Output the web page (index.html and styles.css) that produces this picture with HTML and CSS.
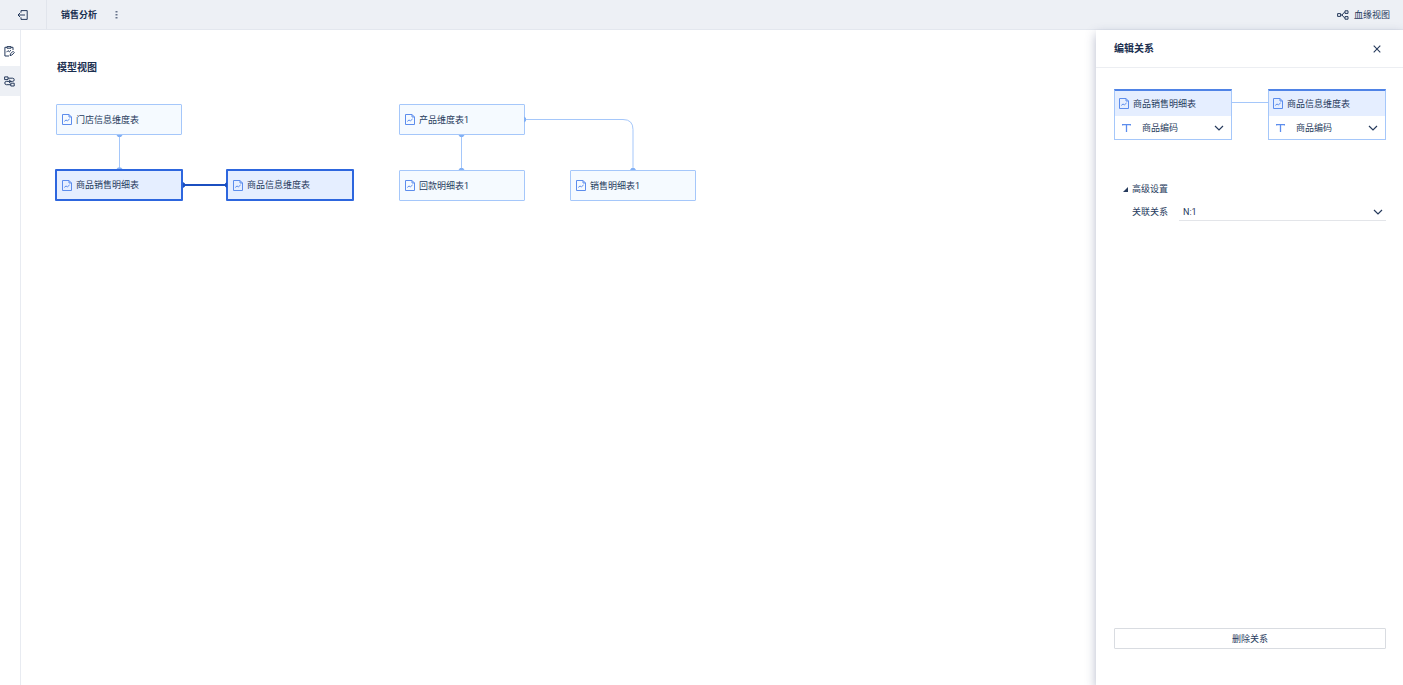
FILE: index.html
```html
<!DOCTYPE html>
<html lang="zh">
<head>
    <meta charset="UTF-8">
    <title>销售分析</title>
    <link rel="stylesheet" href="styles.css">
</head>
<body>
<svg class="defs" aria-hidden="true">
    <symbol id="icon-table" viewBox="0 0 10 11">
        <path d="M.5 .5H7L9.5 3V10.5H.5Z M7 .5V3H9.5" fill="none" stroke="currentColor"/>
        <path d="M2.3 7.4L4 6L5.4 6.8L7.6 5" fill="none" stroke="currentColor"/>
    </symbol>
    <symbol id="icon-arrow" viewBox="0 0 10 6">
        <path d="M1 1L5 5L9 1" fill="none" stroke="currentColor" stroke-width="1.2"/>
    </symbol>
    <symbol id="icon-text" viewBox="0 0 9 8">
        <path d="M.5 1.6V.6H8.5V1.6 M4.5 .6V8" fill="none" stroke="currentColor" stroke-width="1.3"/>
    </symbol>
</svg>

<header class="topbar">
    <button class="exit" aria-label="退出">
        <svg width="11" height="10" viewBox="0 0 11 10"><path d="M4 2.6V.6H10.2V9.4H4V7.4 M8 5H1 M3.2 2.8L1 5L3.2 7.2" fill="none" stroke="currentColor"/></svg>
    </button>
    <h1>销售分析</h1>
    <button class="more" aria-label="更多">
        <svg width="3" height="8" viewBox="0 0 3 8"><path d="M.5 0H2.5V1.5H.5Z M.5 3H2.5V4.5H.5Z M.5 6H2.5V7.5H.5Z" fill="currentColor"/></svg>
    </button>
    <button class="lineage">
        <svg width="12" height="10" viewBox="0 0 12 10"><path d="M.6 3.6H3.6V6.4H.6Z M3.6 5L5 5L7.4 2.2H8 M5 5L7.4 7.8H8 M8 .8H11V3.4H8Z M8 6.6H11V9.2H8Z" fill="none" stroke="currentColor"/></svg>
        血缘视图
    </button>
</header>

<div class="page">
    <nav class="sidebar">
        <button aria-label="数据编辑">
            <svg width="11" height="11" viewBox="0 0 11 11"><path d="M3 1.3H.9V10H5 M7 1.3H9V4 M3 .6H7V2.2H3Z M2.5 6.2L4 4.6L5.3 5.8L7 4.2 M6 9.6L6.5 7.8L9 5.3L10.3 6.6L7.8 9.1Z" fill="none" stroke="currentColor"/></svg>
        </button>
        <button class="active" aria-label="模型视图">
            <svg width="11" height="11" viewBox="0 0 11 11"><path d="M.6 .9H4V3.6H.6Z M4 2.2H8.6Q10.2 2.2 10.2 3.8T8.6 5.4H2.3Q.8 5.4 .8 7T2.3 8.7H6.8 M6.8 7.2H10.2V10H6.8Z M5 3.9L7 5.4L5 7" fill="none" stroke="currentColor"/></svg>
        </button>
    </nav>

    <main>
        <h2>模型视图</h2>
        <div class="canvas">
            <svg class="links" width="641" height="98" viewBox="0 0 641 98">
                <path class="link" d="M63.5 31V66 M405.5 31V66 M469 15.5H567Q577 15.5 577 25.5V66"/>
                <path class="link-active" d="M127 81H171"/>
            </svg>
            <div class="node n1"><svg><use href="#icon-table"/></svg>门店信息维度表</div>
            <div class="node n2"><svg><use href="#icon-table"/></svg>产品维度表1</div>
            <div class="node n3 selected"><svg><use href="#icon-table"/></svg>商品销售明细表</div>
            <div class="node n4 selected"><svg><use href="#icon-table"/></svg>商品信息维度表</div>
            <div class="node n5"><svg><use href="#icon-table"/></svg>回款明细表1</div>
            <div class="node n6"><svg><use href="#icon-table"/></svg>销售明细表1</div>
            <svg class="links" width="641" height="98" viewBox="0 0 641 98">
                <path class="port" d="M60.5 31H66.5L65 33H62Z M60.5 65H66.5L65 63.5H62Z M402.5 31H408.5L407 33H404Z M402.5 66H408.5L407 64H404Z M468 12.5V18.5L470 17V14Z M574 66H580L578.5 64H575.5Z"/>
                <path class="port-active" d="M127 78V84L129 82.5V79.5Z M171 78V84L169 82.5V79.5Z"/>
            </svg>
        </div>
    </main>

    <aside class="panel">
        <div class="panel-head">
            <h2>编辑关系</h2>
            <button aria-label="关闭">
                <svg width="8" height="8" viewBox="0 0 8 8"><path d="M.7 .7L7.3 7.3M7.3 .7L.7 7.3" fill="none" stroke="currentColor" stroke-width="1.1"/></svg>
            </button>
        </div>
        <div class="panel-body">
            <div class="relation">
                <div class="table-card">
                    <div class="table-name"><svg><use href="#icon-table"/></svg>商品销售明细表</div>
                    <div class="field">
                        <svg class="type"><use href="#icon-text"/></svg>
                        <select aria-label="商品销售明细表字段"><option>商品编码</option></select>
                        <svg class="arrow"><use href="#icon-arrow"/></svg>
                    </div>
                </div>
                <span class="joint"></span>
                <div class="table-card">
                    <div class="table-name"><svg><use href="#icon-table"/></svg>商品信息维度表</div>
                    <div class="field">
                        <svg class="type"><use href="#icon-text"/></svg>
                        <select aria-label="商品信息维度表字段"><option>商品编码</option></select>
                        <svg class="arrow"><use href="#icon-arrow"/></svg>
                    </div>
                </div>
            </div>

            <details open>
                <summary><svg width="5" height="5" viewBox="0 0 5 5"><path d="M5 0V5H0Z" fill="currentColor"/></svg>高级设置</summary>
                <div class="setting">
                    <label for="cardinality">关联关系</label>
                    <div class="field">
                        <select id="cardinality"><option>N:1</option><option>1:N</option><option>1:1</option></select>
                        <svg class="arrow"><use href="#icon-arrow"/></svg>
                    </div>
                </div>
            </details>

            <button class="delete">删除关系</button>
        </div>
    </aside>
</div>
</body>
</html>
```

FILE: styles.css
```css
* {
    box-sizing: border-box;
}

body {
    display: flex;
    flex-direction: column;
    margin: 0;
    min-height: 100vh;
    overflow: hidden;
    font: 9px/14px Roboto, "Noto Sans CJK SC", sans-serif;
    color: #263a5c;
    background: #fff;
}

h1, h2 {
    margin: 0;
    font-size: 9px;
    font-weight: bold;
    color: #1b2f50;
}

h2 {
    font-size: 10px;
    line-height: 16px;
}

button, select {
    margin: 0;
    padding: 0;
    border: none;
    border-radius: 0;
    font: inherit;
    color: inherit;
    background: none;
    cursor: pointer;
}

svg {
    flex: none;
    display: block;
}

.defs {
    display: none;
}

/* 顶栏 */
.topbar {
    display: flex;
    align-items: center;
    height: 30px;
    padding-right: 13px;
    background: #edf0f5;
    border-bottom: 1px solid #e3e7ee;
}

.exit {
    display: flex;
    align-items: center;
    justify-content: center;
    width: 47px;
    height: 29px;
    padding-right: 1px;
    border-right: 1px solid #e1e5ec;
}

.topbar h1 {
    margin-left: 14px;
}

.more {
    margin-left: 18px;
    color: #66728a;
}

.lineage {
    display: flex;
    align-items: center;
    gap: 5px;
    margin-left: auto;
}

.page {
    display: flex;
    flex: 1;
}

/* 左侧栏 */
.sidebar {
    width: 21px;
    padding-top: 7px;
    border-right: 1px solid #e8ebf1;
}

.sidebar button {
    display: flex;
    align-items: center;
    justify-content: center;
    width: 20px;
    height: 29px;
    padding-right: 1px;
}

.sidebar .active {
    height: 30px;
    background: #edf0f5;
}

main {
    flex: 1;
    padding: 30px 35px;
}

main h2 {
    padding-left: 1px;
}

/* 模型画布 */
.canvas {
    position: relative;
    margin-top: 28px;
}

.links {
    position: absolute;
    left: 0;
    top: 0;
    pointer-events: none;
}

.link {
    fill: none;
    stroke: #a5c7fa;
}

.link-active {
    stroke: #1b4fc0;
    stroke-width: 2;
}

.port {
    fill: #82b0f5;
}

.port-active {
    fill: #1b4fc0;
}

.node {
    position: absolute;
    display: flex;
    align-items: center;
    gap: 4px;
    width: 126px;
    height: 31px;
    padding-left: 5px;
    border: 1px solid #a5c7fa;
    border-radius: 1px;
    background: #f5faff;
}

.node svg, .table-name svg {
    width: 10px;
    height: 11px;
    color: #5c8ded;
}

.node.selected {
    width: 128px;
    height: 32px;
    border: 2px solid #2d66de;
    background: #e5eeff;
}

.n1 { left: 0; top: 0; }
.n2 { left: 343px; top: 0; }
.n3 { left: -1px; top: 65px; }
.n4 { left: 170px; top: 65px; }
.n5 { left: 343px; top: 66px; }
.n6 { left: 514px; top: 66px; }

/* 右侧编辑面板 */
.panel {
    display: flex;
    flex-direction: column;
    width: 307px;
    background: #fff;
    box-shadow: 0 4px 10px rgba(50, 60, 110, .35);
}

.panel-head {
    display: flex;
    align-items: center;
    justify-content: space-between;
    height: 38px;
    padding: 0 22px 0 18px;
    border-bottom: 1px solid #eceef2;
}

.panel-body {
    display: flex;
    flex: 1;
    flex-direction: column;
    padding: 21px 17px 36px 18px;
}

.relation {
    display: flex;
}

.table-card {
    width: 118px;
    border: 1px solid #a5c7fa;
    border-top: 2px solid #4f83e6;
}

.table-name {
    display: flex;
    align-items: center;
    gap: 4px;
    height: 25px;
    padding-left: 4px;
    background: #e5eeff;
}

.field {
    position: relative;
    display: flex;
    flex: 1;
    align-items: center;
    height: 23px;
}

.field select {
    flex: 1;
    height: 100%;
    appearance: none;
    outline: none;
}

.type {
    width: 9px;
    height: 8px;
    margin: 0 11px 0 7px;
    color: #5c8ded;
}

.arrow {
    position: absolute;
    right: 7px;
    width: 10px;
    height: 6px;
    pointer-events: none;
}

.joint {
    flex: 1;
    height: 1px;
    margin-top: 13px;
    background: #a5c7fa;
}

details {
    margin-top: 42px;
    padding-left: 9px;
}

summary {
    display: flex;
    align-items: center;
    gap: 4px;
    list-style: none;
    cursor: pointer;
}

.setting {
    display: flex;
    align-items: center;
    gap: 11px;
    margin-top: 7px;
    padding-left: 9px;
}

.setting .field {
    height: 18px;
    border-bottom: 1px solid #e3e5e9;
}

.setting select {
    padding-left: 4px;
}

.setting .arrow {
    right: 3px;
}

.delete {
    height: 21px;
    margin-top: auto;
    border: 1px solid #d9dce1;
    border-radius: 1px;
}
```
